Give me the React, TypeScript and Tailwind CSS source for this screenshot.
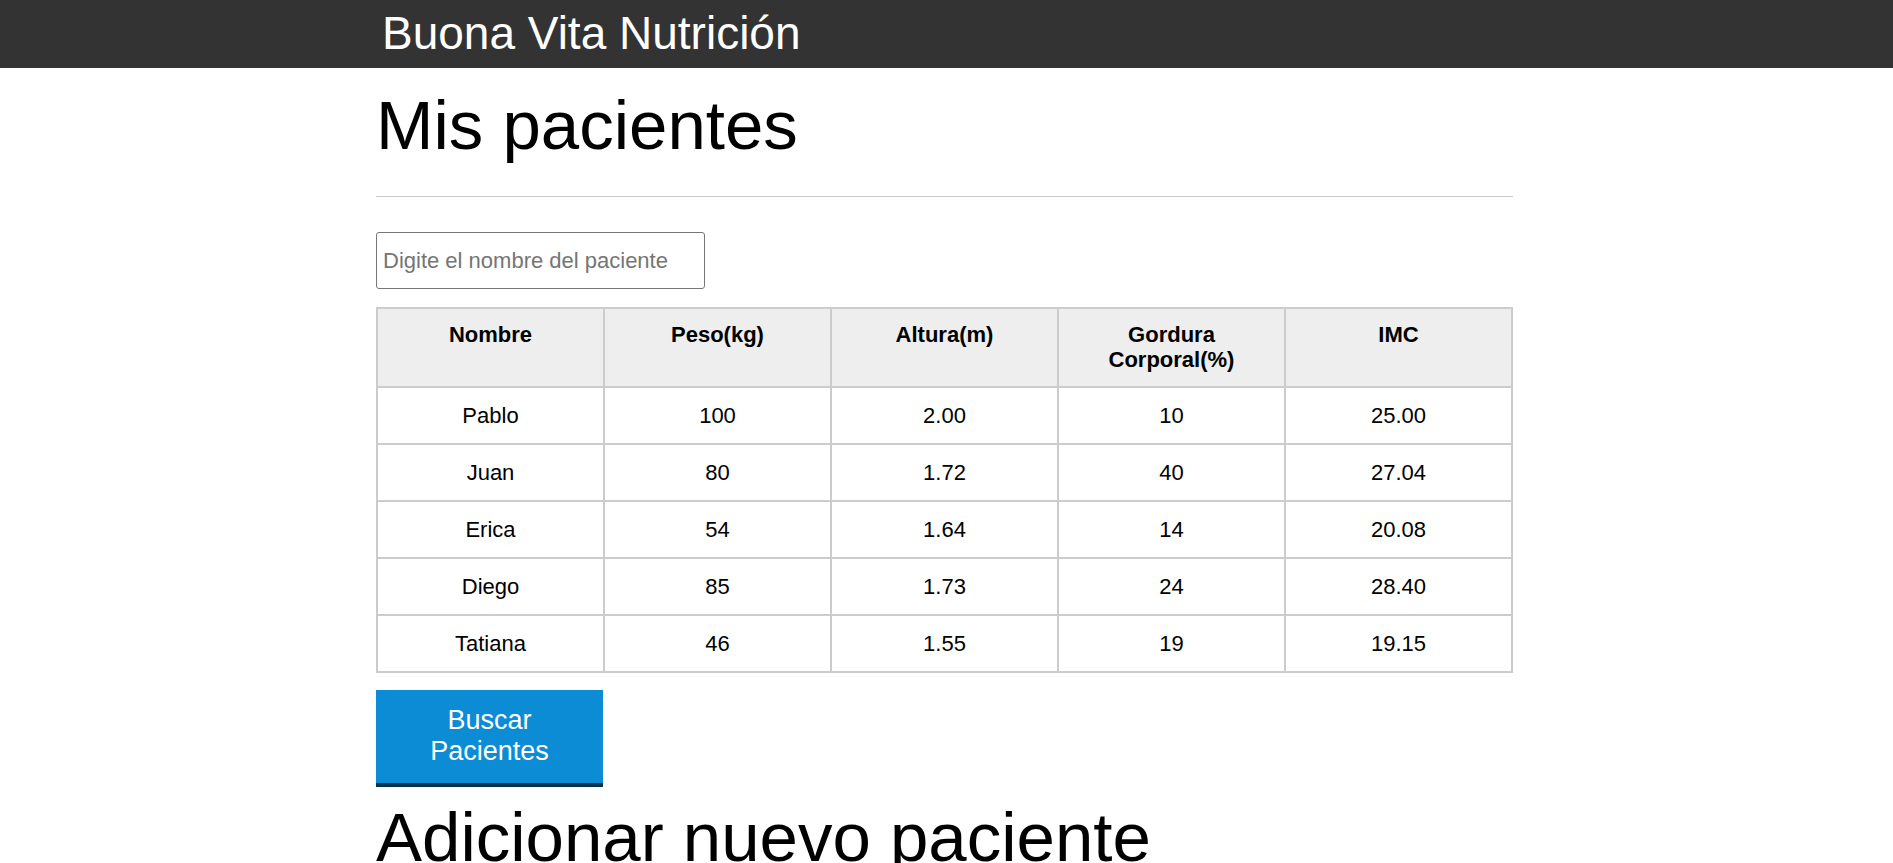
const pacientes = [
  { nombre: 'Pablo', peso: '100', altura: '2.00', gordura: '10', imc: '25.00' },
  { nombre: 'Juan', peso: '80', altura: '1.72', gordura: '40', imc: '27.04' },
  { nombre: 'Erica', peso: '54', altura: '1.64', gordura: '14', imc: '20.08' },
  { nombre: 'Diego', peso: '85', altura: '1.73', gordura: '24', imc: '28.40' },
  { nombre: 'Tatiana', peso: '46', altura: '1.55', gordura: '19', imc: '19.15' },
]

const columnas = ['Nombre', 'Peso(kg)', 'Altura(m)', 'Gordura Corporal(%)', 'IMC']

export default function App() {
  return (
    <div className="min-h-screen bg-white text-black font-['Liberation_Sans',Arial,sans-serif]">
      <header className="bg-[#333333] text-white">
        <div className="mx-auto w-[1141px] pr-[4px]">
          <h1 className="pl-[6px] pt-[7px] pb-[8px] text-[46px] leading-[53px] font-normal">Buona Vita Nutrición</h1>
        </div>
      </header>

      <main className="mx-auto w-[1141px] pr-[4px]">
        <section>
          <h2 className="mt-[18px] pb-[31px] border-b border-[#cccccc] text-[69px] leading-[79px] font-normal">
            Mis pacientes
          </h2>

          <input
            type="text"
            placeholder="Digite el nombre del paciente"
            className="mt-[35px] block h-[57px] w-[329px] rounded-[3px] border border-[#767676] px-[6px] text-[22px] placeholder:text-[#757575] outline-none"
          />

          <table className="mt-[18px] w-full table-fixed border-collapse text-[22px] leading-[25px]">
            <thead>
              <tr>
                {columnas.map((c) => (
                  <th
                    key={c}
                    className="border-2 border-[#cccccc] bg-[#eeeeee] px-[25px] pt-[13px] pb-[14px] align-top font-bold"
                  >
                    {c}
                  </th>
                ))}
              </tr>
            </thead>
            <tbody>
              {pacientes.map((p) => (
                <tr key={p.nombre}>
                  <td className="border-2 border-[#cccccc] py-[15px] text-center">{p.nombre}</td>
                  <td className="border-2 border-[#cccccc] py-[15px] text-center">{p.peso}</td>
                  <td className="border-2 border-[#cccccc] py-[15px] text-center">{p.altura}</td>
                  <td className="border-2 border-[#cccccc] py-[15px] text-center">{p.gordura}</td>
                  <td className="border-2 border-[#cccccc] py-[15px] text-center">{p.imc}</td>
                </tr>
              ))}
            </tbody>
          </table>

          <button className="mt-[17px] block w-[227px] bg-[#0b8cd5] border-b-4 border-[#03324d] px-[30px] pt-[15px] pb-[16px] text-[27px] leading-[31px] text-white">
            Buscar Pacientes
          </button>
        </section>

        <section>
          <h2 className="mt-[11px] text-[69px] leading-[79px] font-normal">Adicionar nuevo paciente</h2>
          <form className="flex flex-col gap-4 py-6 text-[22px]">
            <label className="flex flex-col gap-1">
              Nombre:
              <input className="h-[56px] border border-[#767676] rounded-[3px] px-[6px]" />
            </label>
            <label className="flex flex-col gap-1">
              Peso:
              <input className="h-[56px] border border-[#767676] rounded-[3px] px-[6px]" />
            </label>
          </form>
        </section>
      </main>
    </div>
  )
}
